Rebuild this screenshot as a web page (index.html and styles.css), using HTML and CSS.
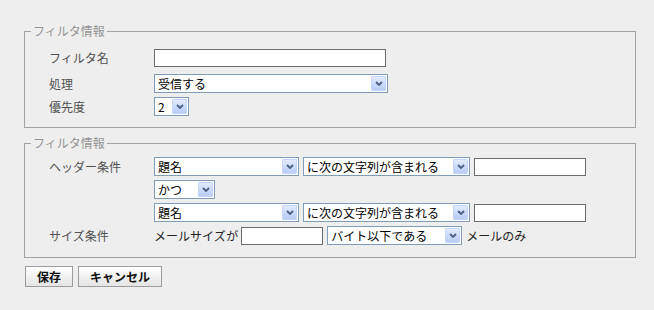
FILE: index.html
```html
<!DOCTYPE html>
<html lang="ja">
<head>
<meta charset="utf-8">
<title>フィルタ情報</title>
<link rel="stylesheet" href="styles.css">
</head>
<body>
<div class="page">
  <fieldset class="box box-basic">
    <legend>フィルタ情報</legend>
    <div class="rows">
      <div class="row row-name">
        <span class="label">フィルタ名</span>
        <div class="ctrls"><input class="text w-name" type="text"></div>
      </div>
      <div class="row">
        <span class="label">処理</span>
        <div class="ctrls">
          <div class="select w-proc"><span class="select-text">受信する</span><span class="select-btn"><svg width="8" height="5" viewBox="0 0 8 5"><path d="M1 1 L4 4 L7 1" fill="none" stroke="#4a5f86" stroke-width="1.8"/></svg></span></div>
        </div>
      </div>
      <div class="row">
        <span class="label">優先度</span>
        <div class="ctrls">
          <div class="select w-prio"><span class="select-text">2</span><span class="select-btn"><svg width="8" height="5" viewBox="0 0 8 5"><path d="M1 1 L4 4 L7 1" fill="none" stroke="#4a5f86" stroke-width="1.8"/></svg></span></div>
        </div>
      </div>
    </div>
  </fieldset>

  <fieldset class="box box-cond">
    <legend>フィルタ情報</legend>
    <div class="rows">
      <div class="row">
        <span class="label">ヘッダー条件</span>
        <div class="ctrls">
          <div class="select w-field"><span class="select-text">題名</span><span class="select-btn"><svg width="8" height="5" viewBox="0 0 8 5"><path d="M1 1 L4 4 L7 1" fill="none" stroke="#4a5f86" stroke-width="1.8"/></svg></span></div>
          <div class="select w-op"><span class="select-text">に次の文字列が含まれる</span><span class="select-btn"><svg width="8" height="5" viewBox="0 0 8 5"><path d="M1 1 L4 4 L7 1" fill="none" stroke="#4a5f86" stroke-width="1.8"/></svg></span></div>
          <input class="text w-value" type="text">
        </div>
      </div>
      <div class="row">
        <span class="label"></span>
        <div class="ctrls">
          <div class="select w-and"><span class="select-text">かつ</span><span class="select-btn"><svg width="8" height="5" viewBox="0 0 8 5"><path d="M1 1 L4 4 L7 1" fill="none" stroke="#4a5f86" stroke-width="1.8"/></svg></span></div>
        </div>
      </div>
      <div class="row">
        <span class="label"></span>
        <div class="ctrls">
          <div class="select w-field"><span class="select-text">題名</span><span class="select-btn"><svg width="8" height="5" viewBox="0 0 8 5"><path d="M1 1 L4 4 L7 1" fill="none" stroke="#4a5f86" stroke-width="1.8"/></svg></span></div>
          <div class="select w-op"><span class="select-text">に次の文字列が含まれる</span><span class="select-btn"><svg width="8" height="5" viewBox="0 0 8 5"><path d="M1 1 L4 4 L7 1" fill="none" stroke="#4a5f86" stroke-width="1.8"/></svg></span></div>
          <input class="text w-value" type="text">
        </div>
      </div>
      <div class="row">
        <span class="label">サイズ条件</span>
        <div class="ctrls">
          <span class="plain plain-size">メールサイズ が</span>
          <input class="text w-size" type="text">
          <div class="select w-unit"><span class="select-text">バイト以下である</span><span class="select-btn"><svg width="8" height="5" viewBox="0 0 8 5"><path d="M1 1 L4 4 L7 1" fill="none" stroke="#4a5f86" stroke-width="1.8"/></svg></span></div>
          <span class="plain">メールのみ</span>
        </div>
      </div>
    </div>
  </fieldset>

  <div class="actions">
    <button class="btn" type="button">保存</button>
    <button class="btn" type="button">キャンセル</button>
  </div>
</div>
</body>
</html>
```

FILE: styles.css
```css
html, body {
  margin: 0;
  padding: 0;
  background: #eeeeee;
}

body {
  font-family: "Noto Sans CJK JP", "Noto Sans", sans-serif;
  font-size: 12px;
  color: #000;
}

.page {
  padding: 24px 18px 0 24px;
}

.box {
  margin: 0;
  border: 1px solid #a2a2a2;
  padding: 0 0 10px 6px;
  min-width: 0;
}

.box legend {
  padding: 0 2px;
  font-size: 12px;
  line-height: 14px;
  color: #939393;
}

.box-basic {
  padding-top: 11px;
  padding-bottom: 11px;
}

.box-cond {
  margin-top: 8px;
  padding-top: 7px;
  padding-bottom: 12px;
}

.rows {
  display: flex;
  flex-direction: column;
  gap: 4px;
  padding-left: 18px;
}

.row {
  display: flex;
  align-items: center;
}

.row-name {
  margin-bottom: 3px;
}

.label {
  width: 105px;
  flex: none;
  color: #505050;
  line-height: 14px;
}

.ctrls {
  display: flex;
  align-items: center;
  gap: 4px;
}

.plain {
  color: #222;
  line-height: 14px;
  white-space: nowrap;
}

.plain-size {
  word-spacing: -2px;
  margin-right: -1px;
}

.text {
  box-sizing: border-box;
  height: 18px;
  margin: 0;
  padding: 0 2px;
  border: 1px solid #6b6b6b;
  background: #fff;
  font: inherit;
  outline: none;
}

.select {
  box-sizing: border-box;
  display: flex;
  align-items: center;
  height: 19px;
  padding: 1px;
  border: 1px solid #7f9db9;
  background: #fff;
}

.select-text {
  flex: 1;
  padding-left: 2px;
  color: #000;
  line-height: 15px;
  white-space: nowrap;
  overflow: hidden;
}

.select-btn {
  box-sizing: border-box;
  flex: none;
  width: 15px;
  height: 15px;
  display: flex;
  align-items: center;
  justify-content: center;
  border: 1px solid #c6d6fb;
  border-radius: 1px;
  background: linear-gradient(#e2ebfe, #b7ccf7);
}

.w-name { width: 232px; }
.w-proc { width: 234px; }
.w-prio { width: 35px; }
.w-field { width: 145px; }
.w-op { width: 167px; }
.w-value { width: 112px; }
.w-and { width: 61px; }
.w-size { width: 82px; }
.w-unit { width: 135px; }

.actions {
  display: flex;
  gap: 5px;
  margin-top: 8px;
  padding-left: 1px;
}

.btn {
  box-sizing: border-box;
  height: 21px;
  margin: 0;
  padding: 0 11px;
  border: 1px solid #9d9d9d;
  background: linear-gradient(#ffffff, #e4e4e4);
  font-family: "Noto Sans CJK JP", "Noto Sans", sans-serif;
  font-size: 12px;
  font-weight: bold;
  line-height: 17px;
  color: #111;
}
```
